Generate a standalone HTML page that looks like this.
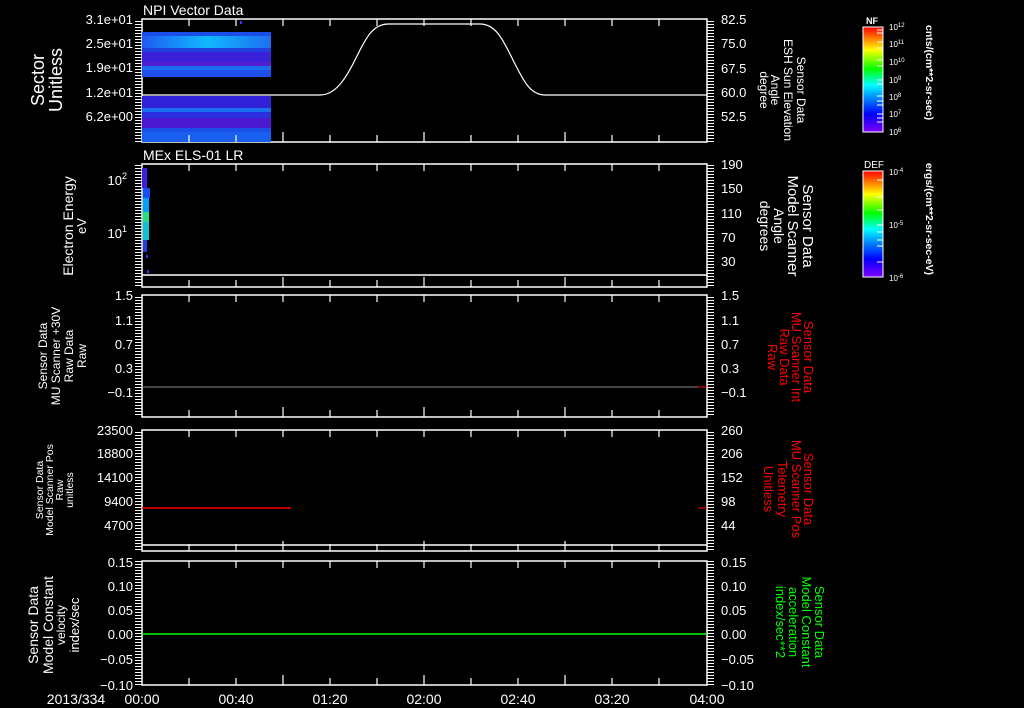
<!DOCTYPE html>
<html><head><meta charset="utf-8"><style>
html,body{margin:0;padding:0;background:#000;}
svg{display:block}
text{font-family:"Liberation Sans",sans-serif;fill:#fff;}
</style></head><body>
<svg width="1024" height="708" viewBox="0 0 1024 708" xmlns="http://www.w3.org/2000/svg">
<defs>
<pattern id="mt" width="8" height="3" patternUnits="userSpaceOnUse"><rect x="0" y="0" width="8" height="1" fill="#fff"/></pattern>
<linearGradient id="cb" x1="0" y1="1" x2="0" y2="0">
<stop offset="0" stop-color="#8000ff"/><stop offset="0.17" stop-color="#0000ff"/><stop offset="0.35" stop-color="#00a0ff"/><stop offset="0.45" stop-color="#00ffff"/><stop offset="0.6" stop-color="#00ff00"/><stop offset="0.78" stop-color="#ffff00"/><stop offset="1" stop-color="#ff0000"/>
</linearGradient>
<linearGradient id="b1" x1="0" y1="0" x2="1" y2="0"><stop offset="0" stop-color="#1e5cf0"/><stop offset="0.5" stop-color="#10b8ff"/><stop offset="1" stop-color="#1e70f0"/></linearGradient>
</defs>

<g fill="none" stroke="#fff" stroke-width="1.5">
<rect x="142" y="19" width="565" height="123"/>
<rect x="142" y="164" width="565" height="123"/>
<rect x="142" y="295" width="565" height="122"/>
<rect x="142" y="430" width="565" height="121"/>
<rect x="142" y="561" width="565" height="124"/>
<line x1="142" y1="275" x2="707" y2="275"/>
<line x1="142" y1="545" x2="707" y2="545"/>
</g>

<g>
<rect x="135" y="19" width="7" height="123" fill="url(#mt)"/>
<rect x="707" y="19" width="7" height="123" fill="url(#mt)"/>
<rect x="135" y="164" width="7" height="123" fill="url(#mt)"/>
<rect x="707" y="164" width="7" height="123" fill="url(#mt)"/>
<rect x="135" y="295" width="7" height="122" fill="url(#mt)"/>
<rect x="707" y="295" width="7" height="122" fill="url(#mt)"/>
<rect x="135" y="430" width="7" height="121" fill="url(#mt)"/>
<rect x="707" y="430" width="7" height="121" fill="url(#mt)"/>
<rect x="135" y="561" width="7" height="124" fill="url(#mt)"/>
<rect x="707" y="561" width="7" height="124" fill="url(#mt)"/>
</g>

<rect x="142" y="32" width="129" height="13" fill="#1a4ee8"/>
<rect x="142" y="36" width="129" height="12" fill="url(#b1)"/>
<rect x="142" y="48" width="129" height="4" fill="#2040e0"/>
<rect x="142" y="52" width="129" height="10" fill="#3a20d8"/>
<rect x="142" y="62" width="129" height="4" fill="#5020d0"/>
<rect x="142" y="66" width="129" height="4" fill="#1c6cf0"/>
<rect x="142" y="70" width="129" height="7" fill="#1d50ea"/>
<rect x="142" y="96" width="129" height="14" fill="#3020d8"/>
<rect x="142" y="108" width="129" height="4" fill="#1a70f0"/>
<rect x="142" y="112" width="129" height="6" fill="#2a30e0"/>
<rect x="142" y="118" width="129" height="10" fill="#4a18d0"/>
<rect x="142" y="128" width="129" height="4" fill="#1a50e8"/>
<rect x="142" y="132" width="129" height="10" fill="#1a60f0"/>
<rect x="240" y="21" width="2" height="3" fill="#6020ff"/>
<path d="M142 95 L320 95 C335 95 345 80 355 60 C365 40 372 24 388 24 L480 24 C496 24 503 40 513 60 C523 80 530 95 545 95 L707 95" fill="none" stroke="#fff" stroke-width="1.2"/>

<rect x="142" y="168" width="5" height="20" fill="#4020e0"/>
<rect x="143" y="188" width="7" height="10" fill="#1050f0"/>
<rect x="143" y="198" width="6" height="14" fill="#00a0ff"/>
<rect x="143" y="212" width="6" height="10" fill="#20e080"/>
<rect x="143" y="222" width="6" height="18" fill="#10c0d0"/>
<rect x="143" y="240" width="4" height="12" fill="#2040e0"/>
<rect x="146" y="255" width="2" height="3" fill="#3030ff"/>
<rect x="147" y="270" width="2" height="3" fill="#3030ff"/>

<line x1="142" y1="387" x2="707" y2="387" stroke="#888" stroke-width="1"/>
<line x1="698" y1="387" x2="707" y2="387" stroke="#f00" stroke-width="1"/>
<line x1="142" y1="508" x2="291" y2="508" stroke="#f00" stroke-width="1.5"/>
<line x1="698" y1="508" x2="707" y2="508" stroke="#f00" stroke-width="1"/>
<line x1="142" y1="634" x2="707" y2="634" stroke="#0f0" stroke-width="1.5"/>

<g stroke="#fff" stroke-width="1.2">
<path d="M189 19v7M236 19v7M283 19v7M330 19v7M377 19v7M424 19v7M471 19v7M518 19v7M565 19v7M612 19v7M659 19v7
M189 142v-7M236 142v-7M283 142v-10M330 142v-7M377 142v-7M424 142v-10M471 142v-7M518 142v-7M565 142v-10M612 142v-7M659 142v-7
M189 164v7M236 164v7M283 164v7M330 164v7M377 164v7M424 164v7M471 164v7M518 164v7M565 164v7M612 164v7M659 164v7
M189 287v-7M236 287v-7M283 287v-10M330 287v-7M377 287v-7M424 287v-10M471 287v-7M518 287v-7M565 287v-10M612 287v-7M659 287v-7
M189 295v7M236 295v7M283 295v7M330 295v7M377 295v7M424 295v7M471 295v7M518 295v7M565 295v7M612 295v7M659 295v7
M189 417v-7M236 417v-7M283 417v-10M330 417v-7M377 417v-7M424 417v-10M471 417v-7M518 417v-7M565 417v-10M612 417v-7M659 417v-7
M189 430v7M236 430v7M283 430v7M330 430v7M377 430v7M424 430v7M471 430v7M518 430v7M565 430v7M612 430v7M659 430v7
M189 551v-7M236 551v-7M283 551v-10M330 551v-7M377 551v-7M424 551v-10M471 551v-7M518 551v-7M565 551v-10M612 551v-7M659 551v-7
M189 561v7M236 561v7M283 561v7M330 561v7M377 561v7M424 561v7M471 561v7M518 561v7M565 561v7M612 561v7M659 561v7
M189 685v-7M236 685v-7M283 685v-10M330 685v-7M377 685v-7M424 685v-10M471 685v-7M518 685v-7M565 685v-10M612 685v-7M659 685v-7"/>
</g>

<text x="143" y="15" font-size="14">NPI Vector Data</text>
<text x="143" y="160" font-size="14">MEx ELS-01 LR</text>

<g font-size="13" text-anchor="end">
<text x="133" y="24">3.1e+01</text>
<text x="133" y="48">2.5e+01</text>
<text x="133" y="72">1.9e+01</text>
<text x="133" y="97">1.2e+01</text>
<text x="133" y="121">6.2e+00</text>
<text x="127" y="185">10<tspan font-size="9" dy="-6">2</tspan></text>
<text x="127" y="238">10<tspan font-size="9" dy="-6">1</tspan></text>
<text x="133" y="300">1.5</text>
<text x="133" y="325">1.1</text>
<text x="133" y="349">0.7</text>
<text x="133" y="373">0.3</text>
<text x="133" y="397">−0.1</text>
<text x="133" y="435">23500</text>
<text x="133" y="458">18800</text>
<text x="133" y="482">14100</text>
<text x="133" y="506">9400</text>
<text x="133" y="530">4700</text>
<text x="133" y="567">0.15</text>
<text x="133" y="591">0.10</text>
<text x="133" y="615">0.05</text>
<text x="133" y="639">0.00</text>
<text x="133" y="664">−0.05</text>
<text x="133" y="690">−0.10</text>
</g>
<g font-size="13">
<text x="721" y="24">82.5</text>
<text x="721" y="48">75.0</text>
<text x="721" y="73">67.5</text>
<text x="721" y="97">60.0</text>
<text x="721" y="121">52.5</text>
<text x="721" y="169">190</text>
<text x="721" y="193">150</text>
<text x="721" y="218">110</text>
<text x="721" y="242">70</text>
<text x="721" y="266">30</text>
<text x="721" y="300">1.5</text>
<text x="721" y="325">1.1</text>
<text x="721" y="349">0.7</text>
<text x="721" y="373">0.3</text>
<text x="721" y="397">−0.1</text>
<text x="721" y="435">260</text>
<text x="721" y="458">206</text>
<text x="721" y="482">152</text>
<text x="721" y="506">98</text>
<text x="721" y="530">44</text>
<text x="721" y="567">0.15</text>
<text x="721" y="591">0.10</text>
<text x="721" y="615">0.05</text>
<text x="721" y="639">0.00</text>
<text x="721" y="664">−0.05</text>
<text x="721" y="690">−0.10</text>
</g>

<g font-size="14" text-anchor="middle">
<text x="76" y="704">2013/334</text>
<text x="142" y="704">00:00</text>
<text x="236" y="704">00:40</text>
<text x="330" y="704">01:20</text>
<text x="424" y="704">02:00</text>
<text x="518" y="704">02:40</text>
<text x="612" y="704">03:20</text>
<text x="707" y="704">04:00</text>
</g>

<g text-anchor="middle">
<text transform="translate(44,80) rotate(-90)" font-size="18">Sector</text>
<text transform="translate(62,80) rotate(-90)" font-size="18">Unitless</text>
<text transform="translate(73,226) rotate(-90)" font-size="14">Electron Energy</text>
<text transform="translate(86,226) rotate(-90)" font-size="13">eV</text>
<text transform="translate(47,356) rotate(-90)" font-size="12">Sensor Data</text>
<text transform="translate(60,356) rotate(-90)" font-size="12">MU Scanner +30V</text>
<text transform="translate(73,356) rotate(-90)" font-size="12">Raw Data</text>
<text transform="translate(86,356) rotate(-90)" font-size="12">Raw</text>
<text transform="translate(43,490) rotate(-90)" font-size="10.5">Sensor Data</text>
<text transform="translate(53,490) rotate(-90)" font-size="10.5">Model Scanner Pos</text>
<text transform="translate(63,490) rotate(-90)" font-size="10.5">Raw</text>
<text transform="translate(73,490) rotate(-90)" font-size="10.5">unitless</text>
<text transform="translate(38,625) rotate(-90)" font-size="14">Sensor Data</text>
<text transform="translate(53,625) rotate(-90)" font-size="14">Model Constant</text>
<text transform="translate(65,625) rotate(-90)" font-size="12">velocity</text>
<text transform="translate(79,625) rotate(-90)" font-size="13">index/sec</text>
</g>

<g text-anchor="middle">
<text transform="translate(797,90) rotate(90)" font-size="12">Sensor Data</text>
<text transform="translate(784,90) rotate(90)" font-size="12">ESH Sun Elevation</text>
<text transform="translate(771,90) rotate(90)" font-size="12">Angle</text>
<text transform="translate(760,90) rotate(90)" font-size="12">degree</text>
<text transform="translate(803,226) rotate(90)" font-size="15">Sensor Data</text>
<text transform="translate(788,226) rotate(90)" font-size="15">Model Scanner</text>
<text transform="translate(774,226) rotate(90)" font-size="14">Angle</text>
<text transform="translate(760,226) rotate(90)" font-size="14">degrees</text>
<text transform="translate(804,357) rotate(90)" font-size="13" style="fill:#f00">Sensor Data</text>
<text transform="translate(792,357) rotate(90)" font-size="13" style="fill:#f00">MU Scanner Int</text>
<text transform="translate(780,357) rotate(90)" font-size="13" style="fill:#f00">Raw Data</text>
<text transform="translate(768,357) rotate(90)" font-size="13" style="fill:#f00">Raw</text>
<text transform="translate(804,489) rotate(90)" font-size="13" style="fill:#f00">Sensor Data</text>
<text transform="translate(792,489) rotate(90)" font-size="13" style="fill:#f00">MU Scanner Pos</text>
<text transform="translate(778,489) rotate(90)" font-size="13" style="fill:#f00">Telemetry</text>
<text transform="translate(764,489) rotate(90)" font-size="13" style="fill:#f00">Unitless</text>
<text transform="translate(815,622) rotate(90)" font-size="13" style="fill:#0f0">Sensor Data</text>
<text transform="translate(802,622) rotate(90)" font-size="13" style="fill:#0f0">Model Constant</text>
<text transform="translate(789,622) rotate(90)" font-size="13" style="fill:#0f0">acceleration</text>
<text transform="translate(776,622) rotate(90)" font-size="13" style="fill:#0f0">index/sec**2</text>
</g>

<rect x="863" y="27" width="20" height="105" fill="url(#cb)" stroke="#fff" stroke-width="1"/>
<rect x="863" y="171" width="20" height="106" fill="url(#cb)" stroke="#fff" stroke-width="1"/>
<g stroke="#fff" stroke-width="1">
<path d="M877 30h6M877 33h6M877 42h6M877 48h6M877 60h6M877 66h6M877 80h6M877 84h6M877 96h6M877 101h6M877 105h6M877 114h6M877 118h6M877 122h6"/>
<path d="M877 180h6M877 197h6M877 210h6M877 225h6M877 232h6M877 240h6M877 246h6M877 262h6"/>
</g>
<text x="866" y="24" font-size="9" font-weight="bold">NF</text>
<text x="864" y="168" font-size="10">DEF</text>
<g font-size="8">
<text x="889" y="30">10<tspan font-size="6" dy="-3">12</tspan></text>
<text x="889" y="47">10<tspan font-size="6" dy="-3">11</tspan></text>
<text x="889" y="65">10<tspan font-size="6" dy="-3">10</tspan></text>
<text x="889" y="83">10<tspan font-size="6" dy="-3">9</tspan></text>
<text x="889" y="100">10<tspan font-size="6" dy="-3">8</tspan></text>
<text x="889" y="117">10<tspan font-size="6" dy="-3">7</tspan></text>
<text x="889" y="135">10<tspan font-size="6" dy="-3">6</tspan></text>
<text x="889" y="175">10<tspan font-size="6" dy="-3">-4</tspan></text>
<text x="889" y="228">10<tspan font-size="6" dy="-3">-5</tspan></text>
<text x="889" y="281">10<tspan font-size="6" dy="-3">-6</tspan></text>
</g>
<text transform="translate(926,25) rotate(90)" font-size="10.5" font-weight="bold">cnts/(cm**2-sr-sec)</text>
<text transform="translate(926,163) rotate(90)" font-size="10.5" font-weight="bold">ergs/(cm**2-sr-sec-eV)</text>
</svg>
</body></html>
